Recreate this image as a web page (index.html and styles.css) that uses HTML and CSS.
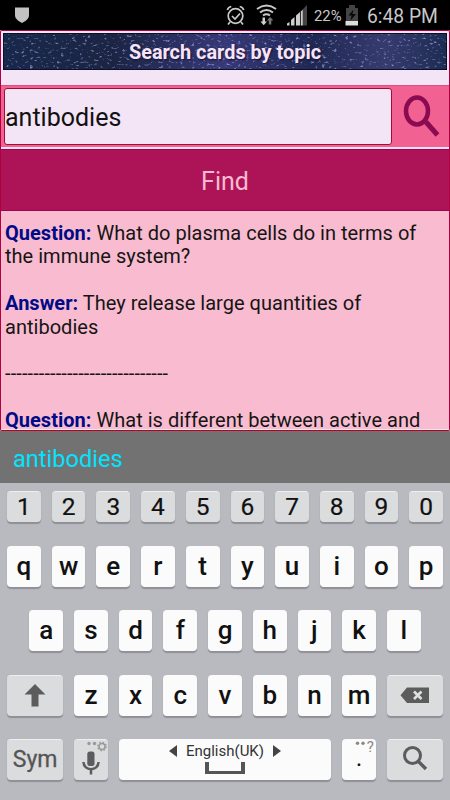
FILE: index.html
```
<!DOCTYPE html>
<html lang="en">
<head>
<meta charset="utf-8">
<title>Search cards by topic</title>
<link rel="stylesheet" href="styles.css">
</head>
<body>
<header class="status">
  <svg class="status-art" width="450" height="30" viewBox="0 0 450 30">
    <path d="M15 7.5h14v7.5c0 4-3.500 6-7 8-3.500-2-7-4-7-8z" fill="#c2c2c2"/>
    <g fill="none" stroke="#c9c9c9" stroke-width="1.700">
      <circle cx="235.500" cy="16" r="7.300"/>
      <path d="M227.300 10q1-3 4-3.500M243.700 10q-1-3-4-3.500M230 22l-2 2.500M241 22l2 2.500M232 16l3 3 5-5.500"/>
      <path d="M257 9q9.500-7 19 0M260 12.500q6.500-5 13 0M263 15.500q3.500-2.500 7 0" stroke-width="2"/>
    </g>
    <path d="M262.500 17.500h2.500v4h2l-3.300 3.800-3.300-3.800h2.100z" fill="#d0d0d0"/>
    <path d="M268.800 24.500v-4h-2l3.300-3.500 3.300 3.500h-2.100v4z" fill="#777"/>
    <path d="M287 25.500v-2l2.500-1.500v3.500zM291 25.500v-5.500l3.500-3v8.500zM296 25.500v-10l4-3.500v13.500z" fill="#ccc"/>
    <path d="M300.800 25.500v-14l2-2v16z" fill="#ccc"/><path d="M303 25.500V9l4-4v20.500z" fill="#444"/>
    <path d="M346 25V8h3V5h6v3h3v17z" fill="#444"/><path d="M345.500 21h12.500v4.500h-12.500z" fill="#ddd"/>
    <path d="M353.500 9.500l-5 6h3l-1 5 5.500-6.500h-3.500z" fill="#080808"/>
  </svg>
  <span class="battery">22%</span><span class="clock">6:48 PM</span>
</header>
<main class="app">
  <div class="banner">
    <svg class="stars" width="444" height="37">
      <defs>
        <linearGradient id="sky"><stop offset="0" stop-color="#18284a"/><stop offset=".25" stop-color="#1b2543"/><stop offset=".5" stop-color="#373877"/><stop offset=".7" stop-color="#1f2852"/><stop offset=".86" stop-color="#363b6e"/><stop offset="1" stop-color="#1c2c51"/></linearGradient>
        <filter id="specks" x="0" y="0" width="100%" height="100%" color-interpolation-filters="sRGB"><feTurbulence type="fractalNoise" baseFrequency=".26 .42" numOctaves="2" seed="8"/><feColorMatrix values="0 0 0 0 .6 0 0 0 0 .62 0 0 0 0 .88 4 2 0 0 -3.450"/></filter>
      </defs>
      <rect width="444" height="37" fill="url(#sky)"/>
      <rect width="444" height="37" filter="url(#specks)" opacity=".75"/>
      <rect x=".5" y=".5" width="443" height="36" fill="none" stroke="#0b1028"/>
    </svg>
    <h1>Search cards by topic</h1>
  </div>
  <div class="search">
    <div class="field"><span>antibodies</span></div>
    <svg class="lens" width="57" height="62" viewBox="0 0 57 62"><ellipse cx="25" cy="26" rx="11" ry="13.500" fill="none" stroke="#8b0b52" stroke-width="4.500"/><path d="M34 37L45.500 50" stroke="#8b0b52" stroke-width="5"/></svg>
  </div>
  <div class="find"><span>Find</span></div>
  <section class="results">
    <p><b>Question:</b> What do plasma cells do in terms of<br>the immune system?</p>
    <p><b>Answer:</b> They release large quantities of<br>antibodies</p>
    <p class="rule">-----------------------------</p>
    <p class="last"><b>Question:</b> What is different between active and</p>
  </section>
</main>
<div class="suggest"><span>antibodies</span></div>
<div class="keyboard">
  <div class="row nums"><i>1</i><i>2</i><i>3</i><i>4</i><i>5</i><i>6</i><i>7</i><i>8</i><i>9</i><i>0</i></div>
  <div class="row"><i>q</i><i>w</i><i>e</i><i>r</i><i>t</i><i>y</i><i>u</i><i>i</i><i>o</i><i>p</i></div>
  <div class="row"><i>a</i><i>s</i><i>d</i><i>f</i><i>g</i><i>h</i><i>j</i><i>k</i><i>l</i></div>
  <div class="row">
    <i class="wide gray"><svg width="56" height="41"><path d="M28 9l10.500 10.500h-7v12h-7v-12h-7z" fill="#5c5c5c"/></svg></i>
    <i>z</i><i>x</i><i>c</i><i>v</i><i>b</i><i>n</i><i>m</i>
    <i class="wide gray"><svg width="56" height="41"><path d="M13.500 20.300l6.500-7.800h22v15.500H20z" fill="#5c5c5c"/><path d="M27 16.500l7.500 7.500M34.500 16.500L27 24" stroke="#dedfe0" stroke-width="2.600"/></svg></i>
  </div>
  <div class="row">
    <i class="wide gray sym"><span>Sym</span></i>
    <i class="gray"><svg width="34" height="41"><rect x="13.300" y="11.500" width="7.200" height="14.500" rx="2.500" fill="#5c5c5c"/><path d="M9.500 22c0 9.500 15 9.500 15 0M17 29.500v5" fill="none" stroke="#5c5c5c" stroke-width="2.500"/><g fill="#999"><circle cx="15" cy="3.500" r="1.700"/><circle cx="20.500" cy="3.500" r="1.700"/></g><circle cx="28" cy="6.500" r="3" fill="none" stroke="#999" stroke-width="1.500"/><circle cx="28" cy="6.500" r="4.200" fill="none" stroke="#999" stroke-width="1.400" stroke-dasharray="1.600 1.700"/></svg></i>
    <i class="space"><span class="lang"><svg width="8" height="12"><path d="M8 0v12L0 6z" fill="#444"/></svg><span>English(UK)</span><svg width="8" height="12"><path d="M0 0v12l8-6z" fill="#444"/></svg></span><b class="bar"></b></i>
    <i class="dot"><svg width="34" height="41"><g fill="#888"><circle cx="15.500" cy="4.300" r="1.700"/><circle cx="21" cy="4.300" r="1.700"/></g></svg><span>.</span><em>?</em></i>
    <i class="wide gray"><svg width="56" height="41"><circle cx="25.500" cy="15.500" r="8" fill="none" stroke="#5c5c5c" stroke-width="3"/><path d="M31 21l8 8" stroke="#5c5c5c" stroke-width="3.300"/></svg></i>
  </div>
</div>
</body>
</html>
```
FILE: styles.css
```
* { box-sizing: border-box; }
body { margin: 0; width: 450px; height: 800px; overflow: hidden; font-family: Roboto, "Liberation Sans", sans-serif; background: #b9babf; }
svg { display: block; flex: none; }
.status { position: relative; height: 30px; background: #000; color: #c8c8c8; display: flex; justify-content: flex-end; align-items: center; padding: 2px 12px 0 0; }
.status-art { position: absolute; left: 0; top: 0; }
.battery { font-size: 14.800px; width: 53px; line-height: 28px; }
.clock { font-size: 19.300px; line-height: 30px; padding-top: 1px; width: 71px; white-space: nowrap; }
.app { height: 401px; border: 1px solid #b00041; border-bottom: 1px solid #b8001f; border-radius: 2px; background: #f3e5f6; overflow: hidden; }
.banner { position: relative; height: 37px; margin: 2px 2px 15px; width: 444px; }
.banner h1 { position: absolute; inset: 0; margin: 0; text-align: center; color: #f8e4f8; font-size: 19.900px; line-height: 40px; font-weight: 700; text-shadow: 1px 1px 2px #101030; }
.search { display: flex; height: 62px; background: #f16292; border-top: 1px solid #dd4e80; padding: 2px 0 2px 3px; }
.field { flex: none; width: 388px; height: 57px; border: 1px solid #a50c32; border-radius: 3px; background: #f3e5f6; display: flex; align-items: center; padding-top: 2px; font-size: 25px; color: #111; }
.lens { margin-top: -3px; }
.find { margin-top: 2px; height: 62px; background: #ac1457; border-bottom: 1px solid #a5004c; border-top: 1px solid #a5004c; color: #f9bbd0; font-size: 25px; display: flex; align-items: center; justify-content: center; padding-top: 2px; }
.results { height: 218px; background: #f9bbd0; padding: 11px 4px 0; font-size: 20px; letter-spacing: .02px; line-height: 23.400px; color: #151515; white-space: nowrap; }
.results p { margin: 0 0 23.400px; }
.results .rule { letter-spacing: .1px; }
.results .last { margin: 0; }
.results b { color: #000b86; }
.suggest { height: 52px; background: #727272; color: #00e5ff; font-size: 23.600px; padding: 3px 0 0 13px; display: flex; align-items: center; }
.keyboard { height: 317px; padding: 8px 7px 0; background: #b9babf; }
.row { display: flex; justify-content: center; gap: 11px; height: 41px; margin-bottom: 23.500px; }
.row i { flex: none; width: 33.700px; height: 41px; border-radius: 4px; background: #fbfbfb; box-shadow: 0 1.500px 1px #8f9095; font-style: normal; font-weight: 500; font-size: 26px; color: #111; display: flex; align-items: center; justify-content: center; line-height: 41px; position: relative; }
.nums { height: 31px; }
.row.nums i { height: 31px; line-height: 29px; padding-bottom: 1px; font-size: 24.500px; font-weight: 400; -webkit-text-stroke: .2px #111; }
.row .gray, .row.nums i { background: #dbdcde; border-top: 1px solid #eee; }
.row .wide { width: 56px; }
.row .sym { font-size: 23px; font-weight: 400; color: #555; -webkit-text-stroke: .3px #555; padding-bottom: 2px; }
.row .space { width: 212.300px; flex-direction: column; justify-content: flex-start; padding-top: 2px; }
.lang { display: flex; align-items: center; gap: 9px; font-size: 15px; line-height: 20px; font-weight: 400; color: #333; }
.bar { width: 40px; height: 12px; margin-top: 1px; border: 3px solid #555; border-width: 0 4px 3px; }
.dot span { position: absolute; left: 0; right: 0; top: 0; text-align: center; font-size: 20px; line-height: 41px; }
.dot em { position: absolute; right: 2px; top: 1px; font-size: 15px; line-height: 15px; font-style: normal; font-weight: 400; color: #888; }
```
